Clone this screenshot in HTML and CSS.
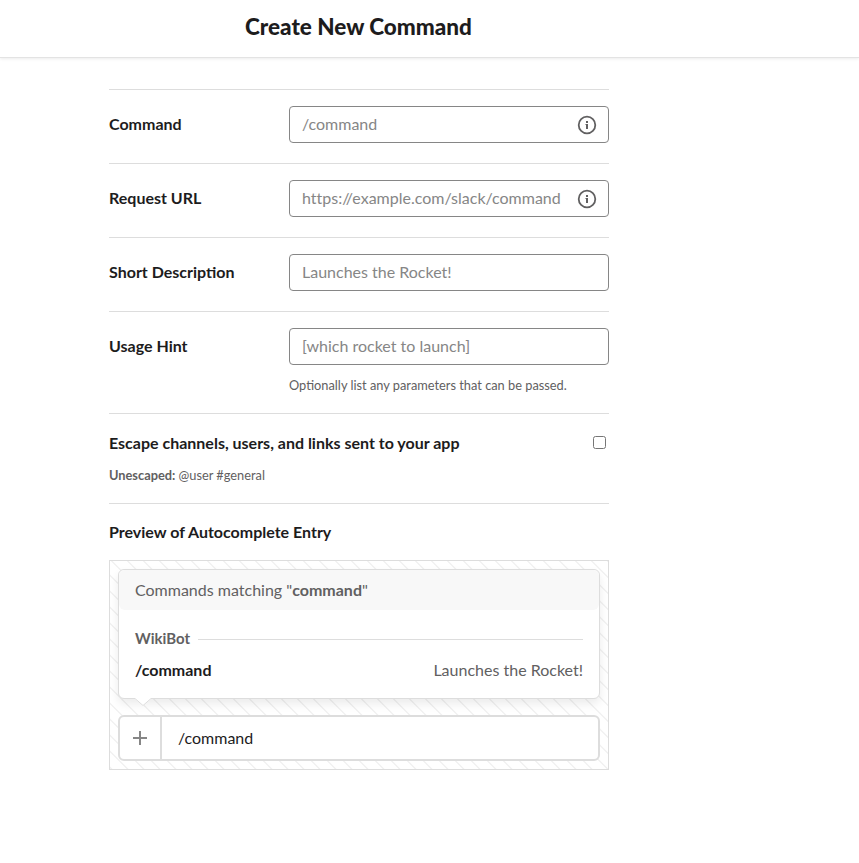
FILE: index.html
```html
<!DOCTYPE html>
<html lang="en">
<head>
<meta charset="utf-8">
<title>Create New Command</title>
<link rel="stylesheet" href="styles.css">
</head>
<body>
<header class="header"><h1 class="title">Create New Command</h1></header>
<main class="form">
  <div class="row">
    <label class="label" for="command">Command</label>
    <div class="field">
      <div class="input-box">
        <input id="command" class="input" type="text" placeholder="/command">
        <svg class="info" viewBox="0 0 20 20"><circle cx="10" cy="10" r="8.3" fill="none" stroke="currentColor" stroke-width="1.8"/><path d="M8.5 9H11V14H9V10H8.5ZM9 6H11V8H9Z" fill="currentColor"/></svg>
      </div>
    </div>
  </div>
  <div class="row">
    <label class="label" for="url">Request URL</label>
    <div class="field">
      <div class="input-box">
        <input id="url" class="input" type="text" placeholder="https://example.com/slack/command">
        <svg class="info" viewBox="0 0 20 20"><circle cx="10" cy="10" r="8.3" fill="none" stroke="currentColor" stroke-width="1.8"/><path d="M8.5 9H11V14H9V10H8.5ZM9 6H11V8H9Z" fill="currentColor"/></svg>
      </div>
    </div>
  </div>
  <div class="row">
    <label class="label" for="desc">Short Description</label>
    <div class="field">
      <div class="input-box"><input id="desc" class="input" type="text" placeholder="Launches the Rocket!"></div>
    </div>
  </div>
  <div class="row row-hint">
    <label class="label" for="hint">Usage Hint</label>
    <div class="field">
      <div class="input-box"><input id="hint" class="input" type="text" placeholder="[which rocket to launch]"></div>
      <p class="note">Optionally list any parameters that can be passed.</p>
    </div>
  </div>
  <div class="escape">
    <div class="escape-line">
      <label class="escape-label" for="escape">Escape channels, users, and links sent to your app</label>
      <input id="escape" class="checkbox" type="checkbox">
    </div>
    <p class="note escape-note"><b>Unescaped:</b> @user #general</p>
  </div>
  <section class="preview">
    <h2 class="preview-title">Preview of Autocomplete Entry</h2>
    <div class="stage">
      <div class="menu">
        <div class="menu-head">Commands matching "<b>command</b>"</div>
        <div class="menu-body">
          <div class="group"><span class="group-name">WikiBot</span><span class="group-line"></span></div>
          <div class="entry"><b class="entry-name">/command</b><span class="entry-desc">Launches the Rocket!</span></div>
        </div>
        <svg class="arrow" viewBox="0 0 16 9"><path d="M0 0V1L8 8L16 1V0Z" fill="#fff"/><path d="M0 .5L8 7.5L16 .5" fill="none" stroke="#ddd"/></svg>
      </div>
      <div class="composer">
        <div class="plus"><svg class="plus-icon" viewBox="0 0 14 14"><path d="M7 0v14M0 7h14" stroke="currentColor" stroke-width="2"/></svg></div>
        <div class="message">/command</div>
      </div>
    </div>
  </section>
</main>
</body>
</html>
```

FILE: styles.css
```css
* { box-sizing: border-box; }
body {
  margin: 0;
  background: #fff;
  color: #1d1c1d;
  font-family: Lato, "Liberation Sans", sans-serif;
  font-size: 16px;
  line-height: 24px;
}
h1, h2, p { margin: 0; }
.header {
  height: 58px;
  padding: 12px 0 0 245px;
  border-bottom: 1px solid #e3e3e3;
  box-shadow: 0 1px 3px rgba(0, 0, 0, .08);
}
.title { font-size: 22.5px; line-height: 30px; font-weight: 900; }
.form { width: 500px; margin: 31px 0 0 109px; }
.row {
  display: flex;
  height: 74px;
  padding-top: 16px;
  border-top: 1px solid #ddd;
}
.row-hint { height: 102px; }
.label { width: 180px; padding-top: 6px; font-weight: 700; }
.field { flex: 1; }
.input-box {
  display: flex;
  align-items: center;
  height: 37px;
  padding: 0 11px 0 12px;
  border: 1px solid #868686;
  border-radius: 4px;
}
.input {
  flex: 1;
  min-width: 0;
  height: 35px;
  padding: 0 0 3px;
  border: 0;
  outline: 0;
  background: none;
  font: inherit;
  font-variant-ligatures: none;
}
.input::placeholder { color: #868686; opacity: 1; }
.info { width: 20px; height: 20px; color: #616061; }
.note { font-size: 12.8px; line-height: 18px; color: #616061; }
.field .note { padding-top: 11px; }
.escape { height: 90px; padding-top: 17px; border-top: 1px solid #ddd; }
.escape-line { display: flex; justify-content: space-between; }
.escape-label { font-weight: 700; }
.checkbox { width: 13px; height: 13px; margin: 5px 3px 0 0; }
.escape-note { padding-top: 11px; }
.preview { padding-top: 16px; border-top: 1px solid #ddd; }
.preview-title { font-size: 16px; line-height: 24px; font-weight: 700; }
.stage {
  height: 210px;
  margin-top: 16px;
  padding: 8px;
  border: 1px solid #ddd;
  background: repeating-linear-gradient(45deg, #fff 0 .3px, #f1f1f1 .8px 1.6px, #fff 2.2px 11.314px);
}
.menu {
  position: relative;
  height: 130px;
  border: 1px solid #ddd;
  border-radius: 6px;
  background: #fff;
  box-shadow: 0 5px 10px rgba(0, 0, 0, .08);
  color: #616061;
}
.menu-head {
  height: 40px;
  padding: 8px 16px 0;
  border-radius: 6px;
  background: #f8f8f8;
}
.menu-body { padding: 17px 16px 0; }
.group { display: flex; align-items: center; gap: 8px; }
.group-name { font-size: 15px; font-weight: 700; margin-top: -1px; }
.group-line { flex: 1; height: 1px; margin-top: 2px; background: #ddd; }
.entry { display: flex; justify-content: space-between; margin-top: 8px; }
.entry-name { color: #1d1c1d; }
.arrow { position: absolute; left: 16px; bottom: -9px; width: 16px; height: 9px; }
.composer {
  display: flex;
  height: 46px;
  margin-top: 16px;
  border: 2px solid #ddd;
  border-radius: 6px;
  background: #fff;
}
.plus {
  display: flex;
  align-items: center;
  justify-content: center;
  width: 42px;
  border-right: 2px solid #ddd;
  color: #868686;
}
.plus-icon { width: 14px; height: 14px; }
.message { padding: 9px 16px; }
```
